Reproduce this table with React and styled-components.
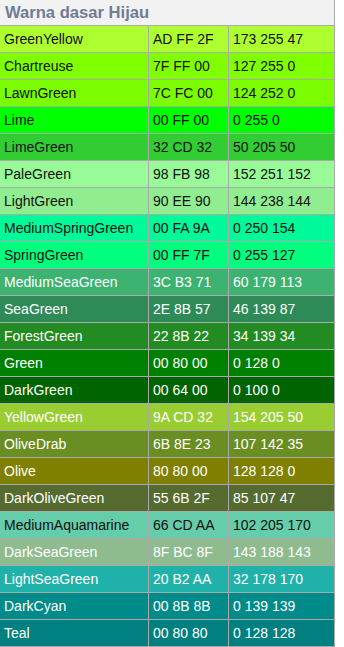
import React from "react";
import styled, { createGlobalStyle } from "styled-components";

const GlobalStyle = createGlobalStyle`
  html, body {
    margin: 0;
    padding: 0;
    background: #ffffff;
  }
  body {
    font-family: "Liberation Sans", Arial, sans-serif;
  }
`;

const colors = [
  ["GreenYellow", "AD FF 2F", "173 255 47", false],
  ["Chartreuse", "7F FF 00", "127 255 0", false],
  ["LawnGreen", "7C FC 00", "124 252 0", false],
  ["Lime", "00 FF 00", "0 255 0", false],
  ["LimeGreen", "32 CD 32", "50 205 50", false],
  ["PaleGreen", "98 FB 98", "152 251 152", false],
  ["LightGreen", "90 EE 90", "144 238 144", false],
  ["MediumSpringGreen", "00 FA 9A", "0 250 154", false],
  ["SpringGreen", "00 FF 7F", "0 255 127", false],
  ["MediumSeaGreen", "3C B3 71", "60 179 113", true],
  ["SeaGreen", "2E 8B 57", "46 139 87", true],
  ["ForestGreen", "22 8B 22", "34 139 34", true],
  ["Green", "00 80 00", "0 128 0", true],
  ["DarkGreen", "00 64 00", "0 100 0", true],
  ["YellowGreen", "9A CD 32", "154 205 50", true],
  ["OliveDrab", "6B 8E 23", "107 142 35", true],
  ["Olive", "80 80 00", "128 128 0", true],
  ["DarkOliveGreen", "55 6B 2F", "85 107 47", true],
  ["MediumAquamarine", "66 CD AA", "102 205 170", false],
  ["DarkSeaGreen", "8F BC 8F", "143 188 143", true],
  ["LightSeaGreen", "20 B2 AA", "32 178 170", true],
  ["DarkCyan", "00 8B 8B", "0 139 139", true],
  ["Teal", "00 80 80", "0 128 128", true],
];

const Table = styled.div`
  width: 335px;
  display: flex;
  flex-direction: column;
`;

const Caption = styled.div`
  height: 25px;
  display: flex;
  align-items: center;
  padding-left: 5px;
  background: #f2f2f2;
  border-right: 1px solid #aaaaaa;
  border-bottom: 1px solid #aaaaaa;
  color: #6e7d96;
  font-size: 16.6px;
  font-weight: bold;
`;

const Row = styled.div`
  display: grid;
  grid-template-columns: 149px 80px 106px;
  height: 27px;
  background: ${(p) => p.$bg};
  color: ${(p) => (p.$light ? "#ffffff" : "#111111")};
`;

const Cell = styled.div`
  display: flex;
  align-items: center;
  padding-left: 4px;
  border-right: 1px solid #aaaaaa;
  border-bottom: 1px solid #aaaaaa;
  font-size: 14px;
  white-space: nowrap;
`;

export default function App() {
  return (
    <>
      <GlobalStyle />
      <Table>
        <Caption>Warna dasar Hijau</Caption>
        {colors.map(([name, hex, rgb, light]) => (
          <Row key={name} $bg={"#" + hex.replace(/ /g, "")} $light={light}>
            <Cell>{name}</Cell>
            <Cell>{hex}</Cell>
            <Cell>{rgb}</Cell>
          </Row>
        ))}
      </Table>
    </>
  );
}
